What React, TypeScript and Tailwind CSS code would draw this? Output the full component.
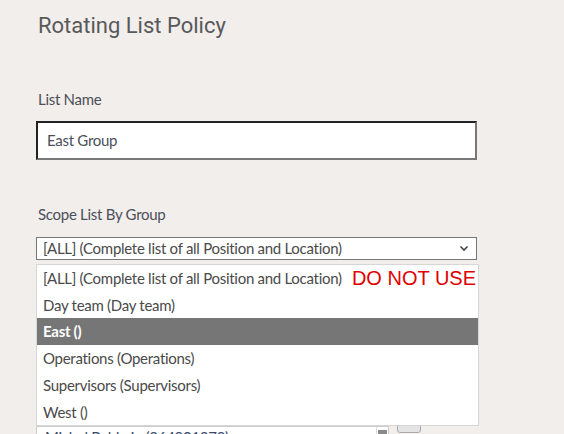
const options = [
  "[ALL] (Complete list of all Position and Location)",
  "Day team (Day team)",
  "East ()",
  "Operations (Operations)",
  "Supervisors (Supervisors)",
  "West ()",
];

export default function App() {
  return (
    <div className="h-[434px] w-full bg-[#f2eeeb] font-['Lato','Open_Sans',sans-serif] tracking-[-0.28px] text-[#4a4f5a] overflow-hidden">
      <div className="pl-[38px] pt-[12px] w-[478px]">
        {/* Header */}
        <h1 className="font-['Roboto',sans-serif] tracking-normal text-[22px] leading-[28px] text-[#58595b]">
          Rotating List Policy
        </h1>

        {/* List name */}
        <div className="mt-[49px] text-[15px] leading-[20px]">List Name</div>
        <div className="mt-[12px] -ml-[2px] h-[39px] w-[441px] bg-white border-2 border-t-[#222] border-l-[#222] border-b-[#777] border-r-[#777] flex items-center px-[9px] text-[15px]">
          East Group
        </div>

        {/* Scope */}
        <div className="mt-[44px] text-[15px] leading-[20px]">Scope List By Group</div>
        <div className="relative mt-[13px] -ml-[2px] w-[441px]">
          <div className="h-[23px] bg-white border border-[#767676] flex items-center justify-between pl-[6px] pr-[6px] text-[15px] text-[#4a4a4a] whitespace-nowrap">
            <span>[ALL] (Complete list of all Position and Location)</span>
            <svg width="10" height="7" viewBox="0 0 10 7" className="mr-[1px]">
              <path d="M1.5 1.5 L5 5 L8.5 1.5" stroke="#444" strokeWidth="1.6" fill="none" />
            </svg>
          </div>

          {/* Content behind the dropdown */}
          <div className="mt-[151px] flex gap-[8px]">
            <div className="mt-[15px] w-[353px] h-[60px] bg-white border border-[#ccc] flex">
              <div className="flex-1 pl-[8px] text-[15px] leading-[20px] text-[#3a4a6a] whitespace-nowrap">
                Michel Baldwin (264901379)
              </div>
              <div className="w-[12px] border-l border-[#ddd] flex justify-center">
                <div className="mt-[3px] w-[9px] h-[30px] bg-[#8a8a8a]" />
              </div>
            </div>
            <div className="w-[24px] h-[22px] rounded-[3px] bg-[#e4e4e4] border border-[#aaa]" />
          </div>

          {/* Dropdown list */}
          <div className="absolute left-0 top-[27px] w-[443px] bg-white border border-[#d6d6d6] text-[15px] text-[#4a4a4a] whitespace-nowrap">
            {options.map((o, i) => (
              <div
                key={o}
                className={`h-[26.7px] flex items-center pl-[6px] ${
                  i === 2 ? "bg-[#767676] text-white font-bold" : ""
                }`}
              >
                <span>{o}</span>
                {i === 0 && (
                  <span className="ml-auto mr-[2px] font-['Liberation_Sans',sans-serif] tracking-normal text-[20px] text-[#e00000]">
                    DO NOT USE
                  </span>
                )}
              </div>
            ))}
          </div>
        </div>
      </div>
    </div>
  );
}
